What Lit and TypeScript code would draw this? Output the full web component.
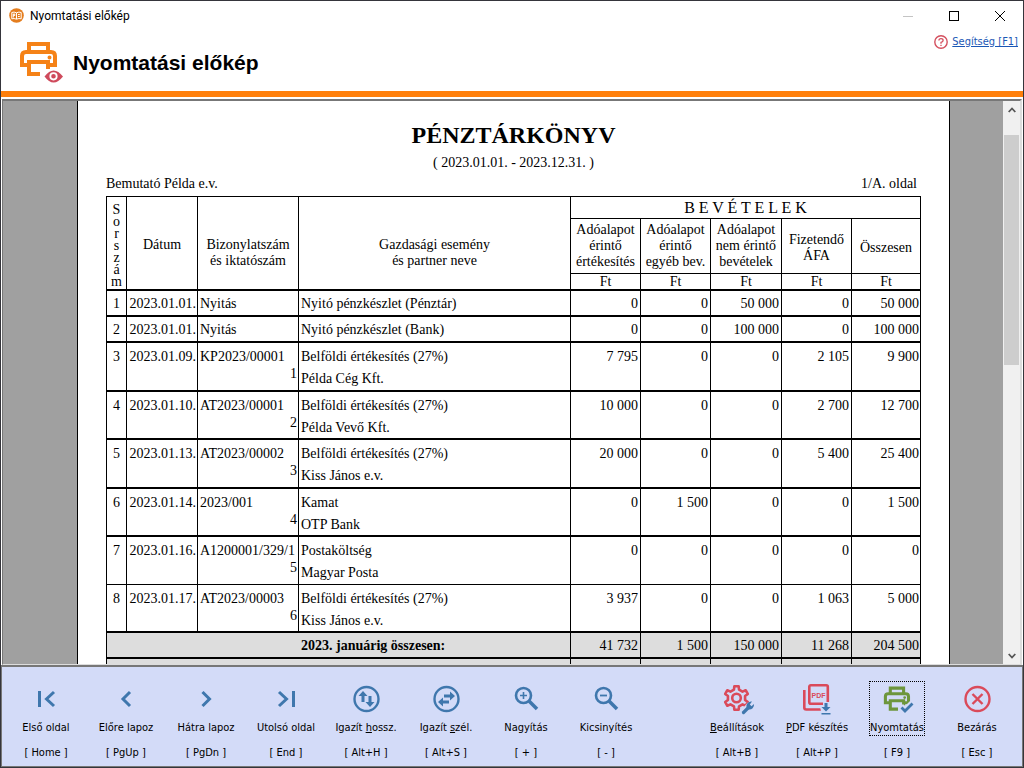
import { LitElement, html, svg, css, nothing } from "lit";
import { customElement, property } from "lit/decorators.js";

const BLUE = "#3f77ad";
const RED = "#da4a5a";
const GREEN = "#6d963c";

const gearPath = (cx: number, cy: number, outer: number, inner: number, teeth: number) => {
  const step = (Math.PI * 2) / teeth;
  const at = (r: number, a: number) => `${(cx + r * Math.sin(a)).toFixed(2)} ${(cy - r * Math.cos(a)).toFixed(2)}`;
  let d = "";
  for (let i = 0; i < teeth; i++) {
    const a = i * step;
    d += `${i ? "L" : "M"}${at(inner, a - step * 0.28)}L${at(outer, a - step * 0.17)}L${at(outer, a + step * 0.17)}L${at(inner, a + step * 0.28)}`;
  }
  return d + "Z";
};

const printer = svg`
  <path d="M9 11V3H28V11M9 24H2V15Q2 11 6 11H31Q35 11 35 15V24H28M20 33H9V21H28V28"/>
  <circle cx="29.500" cy="16.500" r="1" stroke-width="2"/>`;

const stroke = (color: string, width: number, body: unknown) =>
  svg`<g fill="none" stroke=${color} stroke-width=${width}>${body}</g>`;

const icons: Record<string, unknown> = {
  first: stroke(BLUE, 3, svg`<path d="M9.500 8V24M24 9L16.500 16L24 23"/>`),
  prev: stroke(BLUE, 3, svg`<path d="M20 9L13 16L20 23"/>`),
  next: stroke(BLUE, 3, svg`<path d="M12.500 9L19.500 16L12.500 23"/>`),
  last: stroke(BLUE, 3, svg`<path d="M23.500 8V24M9 9L16.500 16L9 23"/>`),
  fitHeight: svg`${stroke(BLUE, 2.4, svg`<circle cx="16.500" cy="16" r="12"/>`)}
    <path fill=${BLUE} d="M13 8L17.500 13H14.500V19H11.500V13H8.500ZM20 24L24.500 19H21.500V13H18.500V19H15.500Z"/>`,
  fitWidth: svg`${stroke(BLUE, 2.4, svg`<circle cx="16.500" cy="16" r="12"/>`)}
    <path fill=${BLUE} d="M25 13L20 8.500V11.500H14V14.500H20V17.500ZM8 19L13 14.500V17.500H19V20.500H13V23.500Z"/>`,
  zoomIn: svg`${stroke(BLUE, 2.6, svg`<circle cx="13.500" cy="12.500" r="7.500"/>`)}
    ${stroke(BLUE, 3.6, svg`<path d="M18.500 17.500L27 26"/>`)}
    ${stroke(BLUE, 1.6, svg`<path d="M10 12.500H17M13.500 9V16"/>`)}`,
  zoomOut: svg`${stroke(BLUE, 2.6, svg`<circle cx="13.500" cy="12.500" r="7.500"/>`)}
    ${stroke(BLUE, 3.6, svg`<path d="M18.500 17.500L27 26"/>`)}
    ${stroke(BLUE, 1.8, svg`<path d="M10 12.500H17"/>`)}`,
  settings: svg`
    <g fill="none" stroke=${RED} stroke-width="2.600" stroke-linejoin="round">
      <path d=${gearPath(15.5, 15, 12, 8.8, 6)}/><circle cx="15.500" cy="15" r="4.300"/></g>
    <g fill="none" stroke-linecap="round">
      <path stroke="#d3dbf8" stroke-width="6.500" d="M23 29L28 23"/>
      <path stroke=${BLUE} stroke-width="3.200" d="M22.500 29.500L28 24"/></g>
    <path fill=${BLUE} d="M25.500 24.500A4.800 4.800 0 0 1 31 18.500L28.800 21.500L30.500 23.300L33 21A4.800 4.800 0 0 1 27.500 26.500Z"/>`,
  pdf: svg`
    ${stroke(RED, 2.6, svg`<rect x="8.300" y="2.300" width="18.500" height="18.500" rx="1.500"/><path d="M3.300 7V24.500Q3.300 26.500 5.300 26.500H21"/>`)}
    <text x="17.600" y="15" text-anchor="middle" font-family="Liberation Sans, sans-serif" font-size="7" font-weight="bold" fill=${RED}>PDF</text>
    <path fill="#d3dbf8" d="M22 19H31V32H20V28L19 24L22 22Z"/>
    <path fill=${BLUE} d="M23.500 20H26.500V24H29.500L25 28.500L20.500 24H23.500ZM20.500 30H29.500V31.500H20.500Z"/>`,
  print: svg`
    <g transform="translate(3 3) scale(.7)" fill="none" stroke=${GREEN} stroke-width="4.400">${printer}</g>
    <path fill="none" stroke="#d3dbf8" stroke-width="7" d="M19.500 23.500L24 28L31.500 20.500"/>
    <path fill="none" stroke=${BLUE} stroke-width="2.800" d="M20.500 24.500L24 28L31.500 20.500"/>`,
  close: stroke(RED, 2.4, svg`<circle cx="16.500" cy="16" r="12"/><path d="M11.500 11L21.500 21M21.500 11L11.500 21"/>`),
};

interface Action { icon: string; label: string; key: string; accel?: string; focused?: boolean }

const navigation: Action[] = [
  { icon: "first", label: "Első oldal", key: "[ Home ]" },
  { icon: "prev", label: "Előre lapoz", key: "[ PgUp ]" },
  { icon: "next", label: "Hátra lapoz", key: "[ PgDn ]" },
  { icon: "last", label: "Utolsó oldal", key: "[ End ]" },
  { icon: "fitHeight", label: "Igazít hossz.", accel: "h", key: "[ Alt+H ]" },
  { icon: "fitWidth", label: "Igazít szél.", accel: "s", key: "[ Alt+S ]" },
  { icon: "zoomIn", label: "Nagyítás", key: "[ + ]" },
  { icon: "zoomOut", label: "Kicsinyítés", key: "[ - ]" },
];
const commands: Action[] = [
  { icon: "settings", label: "Beállítások", accel: "B", key: "[ Alt+B ]" },
  { icon: "pdf", label: "PDF készítés", accel: "P", key: "[ Alt+P ]" },
  { icon: "print", label: "Nyomtatás", key: "[ F9 ]", focused: true },
  { icon: "close", label: "Bezárás", key: "[ Esc ]" },
];

@customElement("tool-action")
class ToolAction extends LitElement {
  @property({ attribute: false }) action!: Action;
  static styles = css`
    :host { display: flex; flex-direction: column; align-items: center; width: 80px; font: 11px/14px "DejaVu Sans Condensed", "DejaVu Sans", sans-serif; color: #000; }
    button { display: flex; flex-direction: column; align-items: center; gap: 6px; box-sizing: border-box; width: 56px; height: 55px; padding: 1px 0 0; border: 1px dotted transparent; background: none; font: inherit; color: inherit; white-space: nowrap; }
    button.focused { border-color: #000; }
    svg { display: block; width: 32px; height: 32px; overflow: visible; }
    .key { margin-top: 10px; }
  `;
  render() {
    const { icon, label, key, accel, focused } = this.action;
    const i = accel ? label.indexOf(accel) : -1;
    return html`<button class=${focused ? "focused" : ""}>
        <svg viewBox="0 0 32 32" aria-hidden="true">${icons[icon]}</svg>
        <span>${i < 0 ? label : html`${label.slice(0, i)}<u>${accel}</u>${label.slice(i + 1)}`}</span>
      </button><span class="key">${key}</span>`;
  }
}

interface Entry { date: string; doc: string; seq?: string; event: string; partner?: string; sums: string[] }

const entries: Entry[] = [
  { date: "2023.01.01.", doc: "Nyitás", event: "Nyitó pénzkészlet (Pénztár)", sums: ["0", "0", "50 000", "0", "50 000"] },
  { date: "2023.01.01.", doc: "Nyitás", event: "Nyitó pénzkészlet (Bank)", sums: ["0", "0", "100 000", "0", "100 000"] },
  { date: "2023.01.09.", doc: "KP2023/00001", seq: "1", event: "Belföldi értékesítés (27%)", partner: "Példa Cég Kft.", sums: ["7 795", "0", "0", "2 105", "9 900"] },
  { date: "2023.01.10.", doc: "AT2023/00001", seq: "2", event: "Belföldi értékesítés (27%)", partner: "Példa Vevő Kft.", sums: ["10 000", "0", "0", "2 700", "12 700"] },
  { date: "2023.01.13.", doc: "AT2023/00002", seq: "3", event: "Belföldi értékesítés (27%)", partner: "Kiss János e.v.", sums: ["20 000", "0", "0", "5 400", "25 400"] },
  { date: "2023.01.14.", doc: "2023/001", seq: "4", event: "Kamat", partner: "OTP Bank", sums: ["0", "1 500", "0", "0", "1 500"] },
  { date: "2023.01.16.", doc: "A1200001/329/1", seq: "5", event: "Postaköltség", partner: "Magyar Posta", sums: ["0", "0", "0", "0", "0"] },
  { date: "2023.01.17.", doc: "AT2023/00003", seq: "6", event: "Belföldi értékesítés (27%)", partner: "Kiss János e.v.", sums: ["3 937", "0", "0", "1 063", "5 000"] },
];
const totals = ["41 732", "1 500", "150 000", "11 268", "204 500"];

@customElement("cash-book")
class CashBook extends LitElement {
  static styles = css`
    :host { display: block; padding: 18px 28px 0; background: #fff; border: solid #000; border-width: 0 1px; font: 14px/16px "Liberation Serif", serif; color: #000; }
    h2 { margin: 0; font-size: 24px; line-height: 32px; text-align: center; }
    .period { margin: 4px 0 0; text-align: center; }
    .meta { display: flex; justify-content: space-between; margin: 5px 4px 4px 0; }
    table { width: 100%; table-layout: fixed; border-collapse: separate; border-spacing: 0; border: solid #000; border-width: 1px 0 0 1px; }
    th, td { box-sizing: border-box; padding: 0; border: solid #000; border-width: 0 1px 1px 0; font-weight: normal; }
    .c-no { width: 20px; }
    .c-date, .c-free { width: 71px; }
    .c-doc { width: 101px; }
    .c-sum { width: 70px; }
    .c-total { width: 69px; }
    .group .tall, .units th { border-bottom-width: 2px; }
    .group .income { height: 22px; font-size: 16px; line-height: 21px; }
    .group .tall { padding-top: 20px; }
    .heads th { height: 55px; }
    .heads .low { padding-top: 4px; }
    .units th { height: 17px; line-height: 14px; }
    .group .narrow { padding: 5px 0 0; line-height: 12px; white-space: pre-line; }
    td { vertical-align: top; border-bottom-width: 2px; white-space: nowrap; }
    .short td { height: 26px; padding-top: 5px; }
    .long td { height: 48px; padding-top: 6px; }
    .long:nth-child(odd) td { height: 49px; }
    .long:nth-child(7) td { height: 48px; border-bottom-width: 1px; }
    .num { text-align: center; }
    td.date { text-align: right; padding-right: 1px; }
    td.left { padding-left: 2px; }
    .seq { display: block; text-align: right; padding: 1px 1px 0 0; }
    .partner { display: block; margin-top: 6px; }
    td.sum { text-align: right; padding-right: 2px; }
    td.sum:last-child { padding-right: 1px; }
    .total td { background: #ddd; }
    .total .name { font-weight: bold; padding-left: 194px; }
  `;
  render() {
    return html`
      <h2>PÉNZTÁRKÖNYV</h2>
      <p class="period">( 2023.01.01. - 2023.12.31. )</p>
      <div class="meta"><span>Bemutató Példa e.v.</span><span>1/A. oldal</span></div>
      <table>
        <colgroup><col class="c-no" /><col class="c-date" /><col class="c-doc" /><col /><col class="c-sum" /><col class="c-sum" /><col class="c-free" /><col class="c-sum" /><col class="c-total" /></colgroup>
        <thead>
          <tr class="group">
            <th rowspan="3" class="tall narrow">${[..."Sorszám"].join("\n")}</th>
            <th rowspan="3" class="tall">Dátum<br />&nbsp;</th>
            <th rowspan="3" class="tall">Bizonylatszám<br />és iktatószám</th>
            <th rowspan="3" class="tall">Gazdasági esemény<br />és partner neve</th>
            <th colspan="5" class="income">B E V É T E L E K</th>
          </tr>
          <tr class="heads">
            <th>Adóalapot<br />érintő<br />értékesítés</th>
            <th>Adóalapot<br />érintő<br />egyéb bev.</th>
            <th>Adóalapot<br />nem érintő<br />bevételek</th>
            <th class="low">Fizetendő<br />ÁFA</th>
            <th class="low">Összesen</th>
          </tr>
          <tr class="units">${totals.map(() => html`<th>Ft</th>`)}</tr>
        </thead>
        <tbody>
          ${entries.map((e, i) => html`<tr class=${e.partner ? "long" : "short"}>
            <td class="num">${i + 1}</td>
            <td class="date">${e.date}</td>
            <td class="left">${e.doc}${e.seq ? html`<span class="seq">${e.seq}</span>` : nothing}</td>
            <td class="left">${e.event}${e.partner ? html`<span class="partner">${e.partner}</span>` : nothing}</td>
            ${e.sums.map((s) => html`<td class="sum">${s}</td>`)}
          </tr>`)}
          <tr class="short total"><td class="name" colspan="4">2023. januárig összesen:</td>${totals.map((s) => html`<td class="sum">${s}</td>`)}</tr>
          <tr class="short total"><td class="name" colspan="4"></td>${totals.map(() => html`<td class="sum"></td>`)}</tr>
        </tbody>
      </table>`;
  }
}

@customElement("app-root")
class AppRoot extends LitElement {
  static styles = css`
    :host { display: grid; grid-template-rows: 29px 61px 6px minmax(0, 1fr) 102px; box-sizing: border-box; height: 100vh; border: 1px solid #35353b; background: #fff; color: #000; font: 12px/16px Roboto, sans-serif; }
    .titlebar { display: flex; align-items: center; padding: 0 17px 0 8px; }
    .titlebar .name { margin-left: 6px; flex: 1; }
    .window { display: flex; gap: 34px; }
    .window button { display: block; padding: 0; border: 0; background: none; width: 12px; height: 12px; }
    svg { display: block; overflow: visible; }
    .header { display: flex; align-items: flex-start; padding: 0 5px 0 19px; }
    .header .logo { margin-top: 11px; }
    h1 { flex: 1; margin: 21px 0 0 9px; font: bold 21px/24px "Liberation Sans", sans-serif; }
    .help { display: flex; align-items: center; gap: 4px; margin-top: 4px; font: 11px/16px "DejaVu Sans Condensed", "DejaVu Sans", sans-serif; }
    .help a { color: #1a57b5; }
    .accent { background: #ff7f0a; }
    .viewer { display: flex; min-height: 0; overflow: hidden; margin: 2px 1px 0; border: 1px solid #777; border-width: 2px 2px 1px 1px; border-color: #777 #ddd #ddd #777; background: #a0a0a0; }
    .canvas { flex: 1; min-width: 0; padding: 0 53px 0 74px; overflow: hidden; }
    .scroll { display: flex; flex-direction: column; width: 17px; background: #f0f0f0; }
    .scroll button { display: grid; place-items: center; height: 17px; padding: 0; border: 0; background: none; }
    .track { flex: 1; padding-top: 17px; }
    .thumb { height: 45%; margin: 0 1px; background: #cdcdcd; }
    .toolbar { display: flex; justify-content: space-between; align-items: flex-start; box-sizing: border-box; padding: 14px 5px 0 4px; background: #d3dbf8; border: 1px solid #777; border-width: 2px 1px 1px; }
    .group { display: flex; }
  `;
  render() {
    return html`
      <header class="titlebar">
        <svg width="15" height="15" viewBox="0 0 15 15" aria-hidden="true"><circle cx="7.500" cy="7.500" r="7.300" fill="#e47d1e" /><path d="M2.800 4.500Q5 3.500 7.500 4.800Q10 3.500 12.200 4.500V10.800Q10 10 7.500 11.200Q5 10 2.800 10.800ZM7.500 5V11M4.300 9.500V6H5.800V7.500H4.300M9 6.500H10.800M9 8.500H10.800" fill="none" stroke="#fff" stroke-width="1" /></svg>
        <span class="name">Nyomtatási előkép</span>
        <div class="window">
          <button aria-label="Kis méret"><svg width="12" height="12"><path d="M1 6.500H11" stroke="#c4c4c4" /></svg></button>
          <button aria-label="Teljes méret"><svg width="12" height="12"><rect x="1.500" y="1.500" width="9" height="9" fill="none" stroke="#000" /></svg></button>
          <button aria-label="Ablak bezárása"><svg width="12" height="12"><path d="M1 1L11 11M11 1L1 11" stroke="#000" fill="none" /></svg></button>
        </div>
      </header>
      <div class="header">
        <svg class="logo" width="44" height="42" viewBox="0 0 44 42" aria-hidden="true">
          <g fill="none" stroke="#f58217" stroke-width="4">${printer}</g>
          <path d="M21 35.500Q33.500 20 45 35.500Q33.500 49 21 35.500Z" fill="#fff" />
          <path d="M24.500 35.500Q33.500 23.500 43 35.500Q33.500 47.500 24.500 35.500Z" fill="#cf4a5c" />
          <circle cx="33.500" cy="35.300" r="3.200" fill="#cf4a5c" stroke="#fff" stroke-width="1.800" />
        </svg>
        <h1>Nyomtatási előkép</h1>
        <div class="help">
          <svg width="14" height="14" viewBox="0 0 14 14" fill="none" stroke="#d4505f" aria-hidden="true"><circle cx="7" cy="7" r="6.200" stroke-width="1.400" /><path stroke-width="1.300" d="M4.900 5.600Q4.900 3.700 7 3.700Q9.100 3.700 9.100 5.400Q9.100 6.500 7 7.400V8.700M7 9.700V11" /></svg>
          <a href="#">Segítség [F1]</a>
        </div>
      </div>
      <div class="accent"></div>
      <main class="viewer">
        <div class="canvas"><cash-book></cash-book></div>
        <div class="scroll">
          <button aria-label="Fel"><svg width="8" height="6" viewBox="0 0 8 6"><path d="M.700 5L4 1.500L7.300 5" fill="none" stroke="#555" stroke-width="1.800" /></svg></button>
          <div class="track"><div class="thumb"></div></div>
          <button aria-label="Le"><svg width="8" height="6" viewBox="0 0 8 6"><path d="M.700 1L4 4.500L7.300 1" fill="none" stroke="#555" stroke-width="1.800" /></svg></button>
        </div>
      </main>
      <footer class="toolbar">
        <div class="group">${navigation.map((a) => html`<tool-action .action=${a}></tool-action>`)}</div>
        <div class="group">${commands.map((a) => html`<tool-action .action=${a}></tool-action>`)}</div>
      </footer>`;
  }
}
